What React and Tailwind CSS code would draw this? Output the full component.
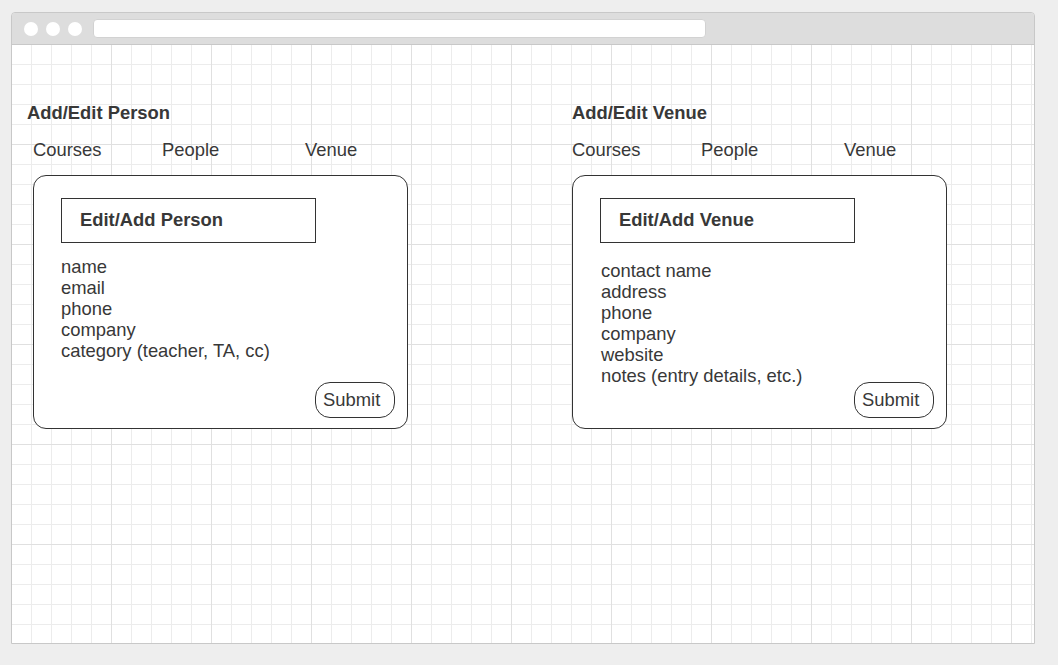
import React from "react";

const personFields = ["name", "email", "phone", "company", "category (teacher, TA, cc)"];
const venueFields = ["contact name", "address", "phone", "company", "website", "notes (entry details, etc.)"];

const Nav = () => (
  <div className="flex text-[18.4px] leading-[21px]">
    <span className="w-[129px]">Courses</span>
    <span className="w-[143px]">People</span>
    <span>Venue</span>
  </div>
);

const FormCard = ({ heading, fields, listTop, buttonTop }) => (
  <div className="w-[375px] h-[254px] border border-[#333333] rounded-[13px] bg-white flex flex-col pt-[22px] pl-[27px]">
    {/* header box */}
    <div className="w-[255px] h-[45px] border border-[#333333] flex items-center pl-[18px] pb-[2px] font-bold text-[18.4px] leading-[21px]">
      {heading}
    </div>
    <div className={`flex flex-col text-[18.4px] leading-[21px] ${listTop}`}>
      {fields.map((f) => (
        <span key={f}>{f}</span>
      ))}
    </div>
    <button
      className={`self-end mr-[12px] w-[80px] h-[36px] border border-[#333333] rounded-[15px] bg-white text-left pl-[7px] pb-[2px] text-[18.4px] leading-[21px] text-[#383838] ${buttonTop}`}
    >
      Submit
    </button>
  </div>
);

export default function App() {
  return (
    <div className="w-full h-[665px] bg-[#eeeeee] pt-[12px] pl-[11px] font-['Liberation_Sans',Arial,sans-serif] text-[#383838]">
      <div className="w-[1024px] h-[632px] border border-[#c8c8c8] rounded-t-[4px] flex flex-col overflow-hidden">
        {/* title bar */}
        <div className="h-[32px] shrink-0 bg-[#dddddd] border-b border-[#c8c8c8] flex items-center pl-[12px]">
          <span className="w-[14px] h-[14px] rounded-full bg-white" />
          <span className="w-[14px] h-[14px] rounded-full bg-white ml-[8px]" />
          <span className="w-[14px] h-[14px] rounded-full bg-white ml-[8px]" />
          <span className="w-[613px] h-[19px] rounded-[4px] bg-white border border-[#d2d2d2] ml-[11px]" />
        </div>

        {/* canvas */}
        <div className="flex-1 flex pl-[15px] pt-[57px] bg-white bg-[image:linear-gradient(to_right,transparent_99px,#e0e0e0_99px),linear-gradient(to_bottom,transparent_99px,#e0e0e0_99px),linear-gradient(to_right,transparent_19px,#ececec_19px),linear-gradient(to_bottom,transparent_19px,#ececec_19px)] bg-[size:100px_100px,100px_100px,20px_20px,20px_20px]">
          {/* left column */}
          <div className="w-[545px] flex flex-col">
            <div className="font-bold text-[18.4px] leading-[21px]">Add/Edit Person</div>
            <div className="mt-[16px] pl-[6px]">
              <Nav />
            </div>
            <div className="mt-[15px] pl-[6px]">
              <FormCard heading="Edit/Add Person" fields={personFields} listTop="mt-[13px]" buttonTop="mt-[21px]" />
            </div>
          </div>

          {/* right column */}
          <div className="flex flex-col">
            <div className="font-bold text-[18.4px] leading-[21px]">Add/Edit Venue</div>
            <div className="mt-[16px]">
              <Nav />
            </div>
            <div className="mt-[15px]">
              <FormCard heading="Edit/Add Venue" fields={venueFields} listTop="mt-[17px] pl-px" buttonTop="-mt-[4px]" />
            </div>
          </div>
        </div>
      </div>
    </div>
  );
}
